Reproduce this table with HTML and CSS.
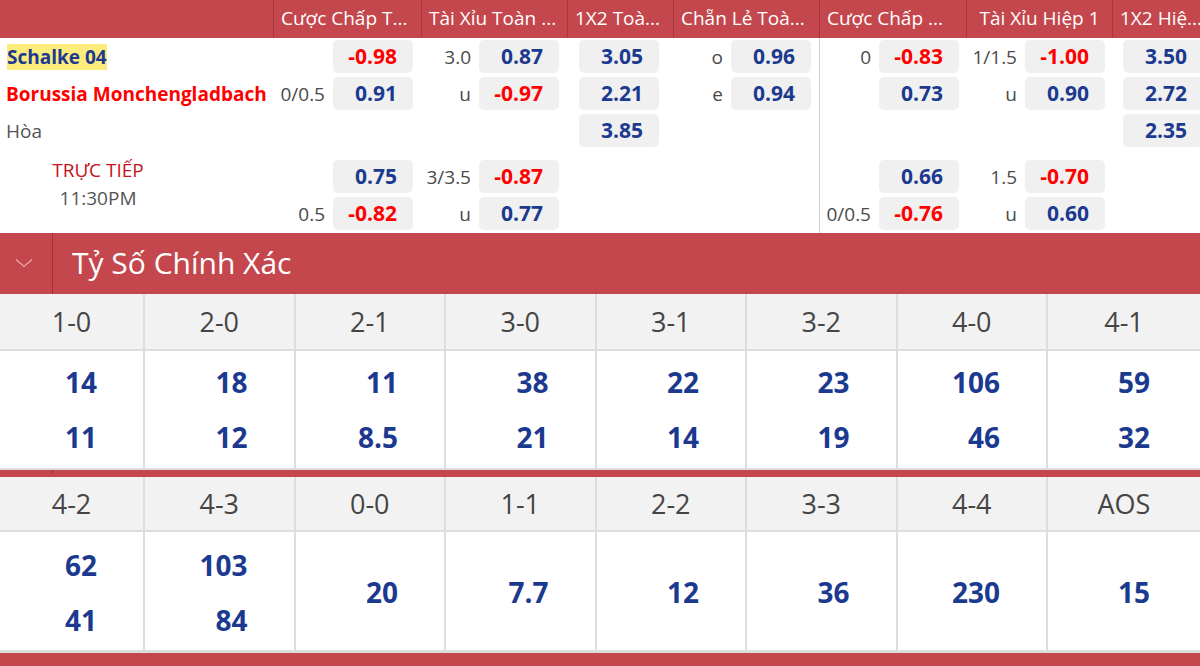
FILE: index.html
```html
<!DOCTYPE html>
<html lang="vi">
<head>
<meta charset="utf-8">
<title>Kèo</title>
<link rel="stylesheet" href="styles.css">
</head>
<body>
<div class="page">
  <div class="market-head">
    <div class="mh-team"></div>
    <div class="mh-cell w148">Cược Chấp T...</div>
    <div class="mh-cell w146">Tài Xỉu Toàn ...</div>
    <div class="mh-cell w106">1X2 Toà...</div>
    <div class="mh-cell w146">Chẵn Lẻ Toà...</div>
    <div class="mh-cell w147">Cược Chấp ...</div>
    <div class="mh-cell w146 center">Tài Xỉu Hiệp 1</div>
    <div class="mh-cell w102">1X2 Hiệ...</div>
  </div>

  <div class="match">
    <div class="ft-grid">
      <div class="team"><span class="hl home">Schalke 04</span></div>
      <div class="cell"><span class="odd neg">-0.98</span></div>
      <div class="cell"><span class="lbl">3.0</span><span class="odd">0.87</span></div>
      <div class="cell mid"><span class="odd">3.05</span></div>
      <div class="cell"><span class="lbl">o</span><span class="odd">0.96</span></div>

      <div class="team"><span class="away">Borussia Monchengladbach</span></div>
      <div class="cell"><span class="lbl">0/0.5</span><span class="odd">0.91</span></div>
      <div class="cell"><span class="lbl">u</span><span class="odd neg">-0.97</span></div>
      <div class="cell mid"><span class="odd">2.21</span></div>
      <div class="cell"><span class="lbl">e</span><span class="odd">0.94</span></div>

      <div class="team"><span class="draw">Hòa</span></div>
      <div class="cell"></div>
      <div class="cell"></div>
      <div class="cell mid"><span class="odd">3.85</span></div>
      <div class="cell"></div>

      <div class="spacer"></div>

      <div class="live">
        <span class="live-tag">TRỰC TIẾP</span>
        <span class="live-time">11:30PM</span>
      </div>
      <div class="cell"><span class="odd">0.75</span></div>
      <div class="cell"><span class="lbl">3/3.5</span><span class="odd neg">-0.87</span></div>
      <div class="cell mid"></div>
      <div class="cell"></div>

      <div class="cell"><span class="lbl">0.5</span><span class="odd neg">-0.82</span></div>
      <div class="cell"><span class="lbl">u</span><span class="odd">0.77</span></div>
      <div class="cell mid"></div>
      <div class="cell"></div>
    </div>

    <div class="ht-grid">
      <div class="cell"><span class="lbl">0</span><span class="odd neg">-0.83</span></div>
      <div class="cell"><span class="lbl">1/1.5</span><span class="odd neg">-1.00</span></div>
      <div class="cell mid"><span class="odd">3.50</span></div>

      <div class="cell"><span class="odd">0.73</span></div>
      <div class="cell"><span class="lbl">u</span><span class="odd">0.90</span></div>
      <div class="cell mid"><span class="odd">2.72</span></div>

      <div class="cell"></div>
      <div class="cell"></div>
      <div class="cell mid"><span class="odd">2.35</span></div>

      <div class="spacer"></div>

      <div class="cell"><span class="odd">0.66</span></div>
      <div class="cell"><span class="lbl">1.5</span><span class="odd neg">-0.70</span></div>
      <div class="cell mid"></div>

      <div class="cell"><span class="lbl">0/0.5</span><span class="odd neg">-0.76</span></div>
      <div class="cell"><span class="lbl">u</span><span class="odd">0.60</span></div>
      <div class="cell mid"></div>
    </div>
  </div>

  <div class="section-bar">
    <div class="chev">
      <svg width="18" height="10" viewBox="0 0 18 10"><polyline points="1,1.5 9,8.5 17,1.5" fill="none" stroke="#eba6a9" stroke-width="1.3"/></svg>
    </div>
    <div class="section-title">Tỷ Số Chính Xác</div>
  </div>

  <div class="scores">
    <div class="score-grid">
      <div class="sh">1-0</div>
      <div class="sh">2-0</div>
      <div class="sh">2-1</div>
      <div class="sh">3-0</div>
      <div class="sh">3-1</div>
      <div class="sh">3-2</div>
      <div class="sh">4-0</div>
      <div class="sh">4-1</div>

      <div class="sd"><span>14</span><span>11</span></div>
      <div class="sd"><span>18</span><span>12</span></div>
      <div class="sd"><span>11</span><span>8.5</span></div>
      <div class="sd"><span>38</span><span>21</span></div>
      <div class="sd"><span>22</span><span>14</span></div>
      <div class="sd"><span>23</span><span>19</span></div>
      <div class="sd"><span>106</span><span>46</span></div>
      <div class="sd"><span>59</span><span>32</span></div>
    </div>

    <div class="sep"><span class="sep-tick"></span></div>

    <div class="score-grid second">
      <div class="sh">4-2</div>
      <div class="sh">4-3</div>
      <div class="sh">0-0</div>
      <div class="sh">1-1</div>
      <div class="sh">2-2</div>
      <div class="sh">3-3</div>
      <div class="sh">4-4</div>
      <div class="sh">AOS</div>

      <div class="sd"><span>62</span><span>41</span></div>
      <div class="sd"><span>103</span><span>84</span></div>
      <div class="sd"><span>20</span></div>
      <div class="sd"><span>7.7</span></div>
      <div class="sd"><span>12</span></div>
      <div class="sd"><span>36</span></div>
      <div class="sd"><span>230</span></div>
      <div class="sd"><span>15</span></div>
    </div>

    <div class="sep bottom"></div>
  </div>
</div>
</body>
</html>
```

FILE: styles.css
```css
* {
  box-sizing: border-box;
  margin: 0;
  padding: 0;
}

html, body {
  width: 1200px;
  height: 666px;
  overflow: hidden;
  background: #ffffff;
}

body {
  font-family: "Open Sans", "Noto Sans", "DejaVu Sans", sans-serif;
  color: #444444;
}

.page {
  width: 1200px;
}

/* ---------- market header ---------- */
.market-head {
  display: flex;
  height: 38px;
  background: #c4474d;
  color: #ffffff;
  font-size: 19px;
  line-height: 37px;
  white-space: nowrap;
}

.mh-team {
  flex: none;
  width: 273px;
}

.mh-cell {
  flex: none;
  overflow: hidden;
  padding: 0 7px;
  border-left: 1px solid #a5373d;
}

.mh-cell.center {
  text-align: center;
  padding: 0;
}

.w148 { width: 148px; }
.w146 { width: 146px; }
.w147 { width: 147px; }
.w106 { width: 106px; }
.w102 { width: 110px; }

/* ---------- match odds ---------- */
.match {
  display: flex;
  height: 195px;
}

.ft-grid,
.ht-grid {
  display: grid;
  grid-template-rows: 33px 33px 33px 5px 33px 33px;
  row-gap: 4px;
  padding-top: 2px;
  padding-bottom: 3px;
}

.ft-grid {
  grid-template-columns: 273px 148px 146px 106px 146px;
}

.ht-grid {
  grid-template-columns: 147px 146px 110px;
  border-left: 1px solid #cfcfcf;
}

.spacer {
  grid-column: 1 / -1;
}

.cell {
  display: flex;
  align-items: center;
  justify-content: flex-end;
  gap: 8px;
  padding-right: 8px;
}

.cell.mid {
  justify-content: flex-start;
  padding-right: 0;
  padding-left: 12px;
}

.ht-grid .cell.mid {
  padding-left: 10px;
}

.odd {
  flex: none;
  width: 80px;
  height: 33px;
  line-height: 33px;
  border-radius: 5px;
  background: #f0f0f0;
  text-align: right;
  padding-right: 16px;
  font-size: 21px;
  font-weight: 700;
  color: #1b3a8f;
}

.odd.neg {
  color: #ff0000;
}

.lbl {
  font-size: 19px;
  color: #4a4a4a;
}

.team {
  display: flex;
  align-items: center;
  padding-left: 7px;
  white-space: nowrap;
}

.home,
.away {
  font-size: 19px;
  font-weight: 700;
  line-height: 26px;
}

.home {
  color: #1b3a8f;
}

.hl {
  background: #fbec7c;
}

.away {
  color: #ff0000;
  margin-left: -1px;
}

.draw {
  font-size: 19px;
  color: #555555;
  margin-left: -1px;
}

.live {
  grid-row: span 2;
  width: 196px;
  margin-top: -4px;
  display: flex;
  flex-direction: column;
  align-items: center;
  font-size: 19px;
  line-height: 28px;
}

.live-tag {
  color: #c3131b;
}

.live-time {
  color: #555555;
}

/* ---------- section bar ---------- */
.section-bar {
  display: flex;
  height: 61px;
  background: #c4474d;
  color: #ffffff;
}

.chev {
  flex: none;
  width: 53px;
  border-right: 1px solid #9f3338;
  display: flex;
  align-items: center;
  padding-left: 15px;
  padding-bottom: 2px;
}

.chev svg {
  display: block;
}

.section-title {
  display: flex;
  align-items: center;
  padding-left: 19px;
  font-size: 30px;
  padding-bottom: 2px;
}

/* ---------- correct score ---------- */
.score-grid {
  display: grid;
  grid-template-columns: 145px repeat(6, 150.5px) 1fr;
}

.sh {
  height: 57px;
  background: #f2f2f2;
  border-right: 2px solid #dddddd;
  border-bottom: 2px solid #dddddd;
  display: flex;
  align-items: center;
  justify-content: center;
  font-size: 27px;
  color: #454545;
}

.second .sh {
  height: 55px;
}

.sd {
  height: 119px;
  border-right: 2px solid #dddddd;
  border-bottom: 2px solid #dddddd;
  display: flex;
  flex-direction: column;
  align-items: flex-end;
  justify-content: center;
  padding-right: 46px;
  font-size: 28px;
  font-weight: 700;
  line-height: 55px;
  color: #1b3a8f;
}

.second .sd {
  height: 121px;
  border-bottom-width: 3px;
  padding-top: 3px;
}

.sh:nth-child(8),
.sd:nth-child(16) {
  border-right: none;
}

.sd:nth-child(16) {
  padding-right: 50px;
}

.sep {
  position: relative;
  height: 7px;
  background: #c4474d;
}

.sep-tick {
  position: absolute;
  left: 52px;
  top: 0;
  width: 1px;
  height: 3px;
  background: #8f2e33;
}

.sep.bottom {
  height: 13px;
}
```
